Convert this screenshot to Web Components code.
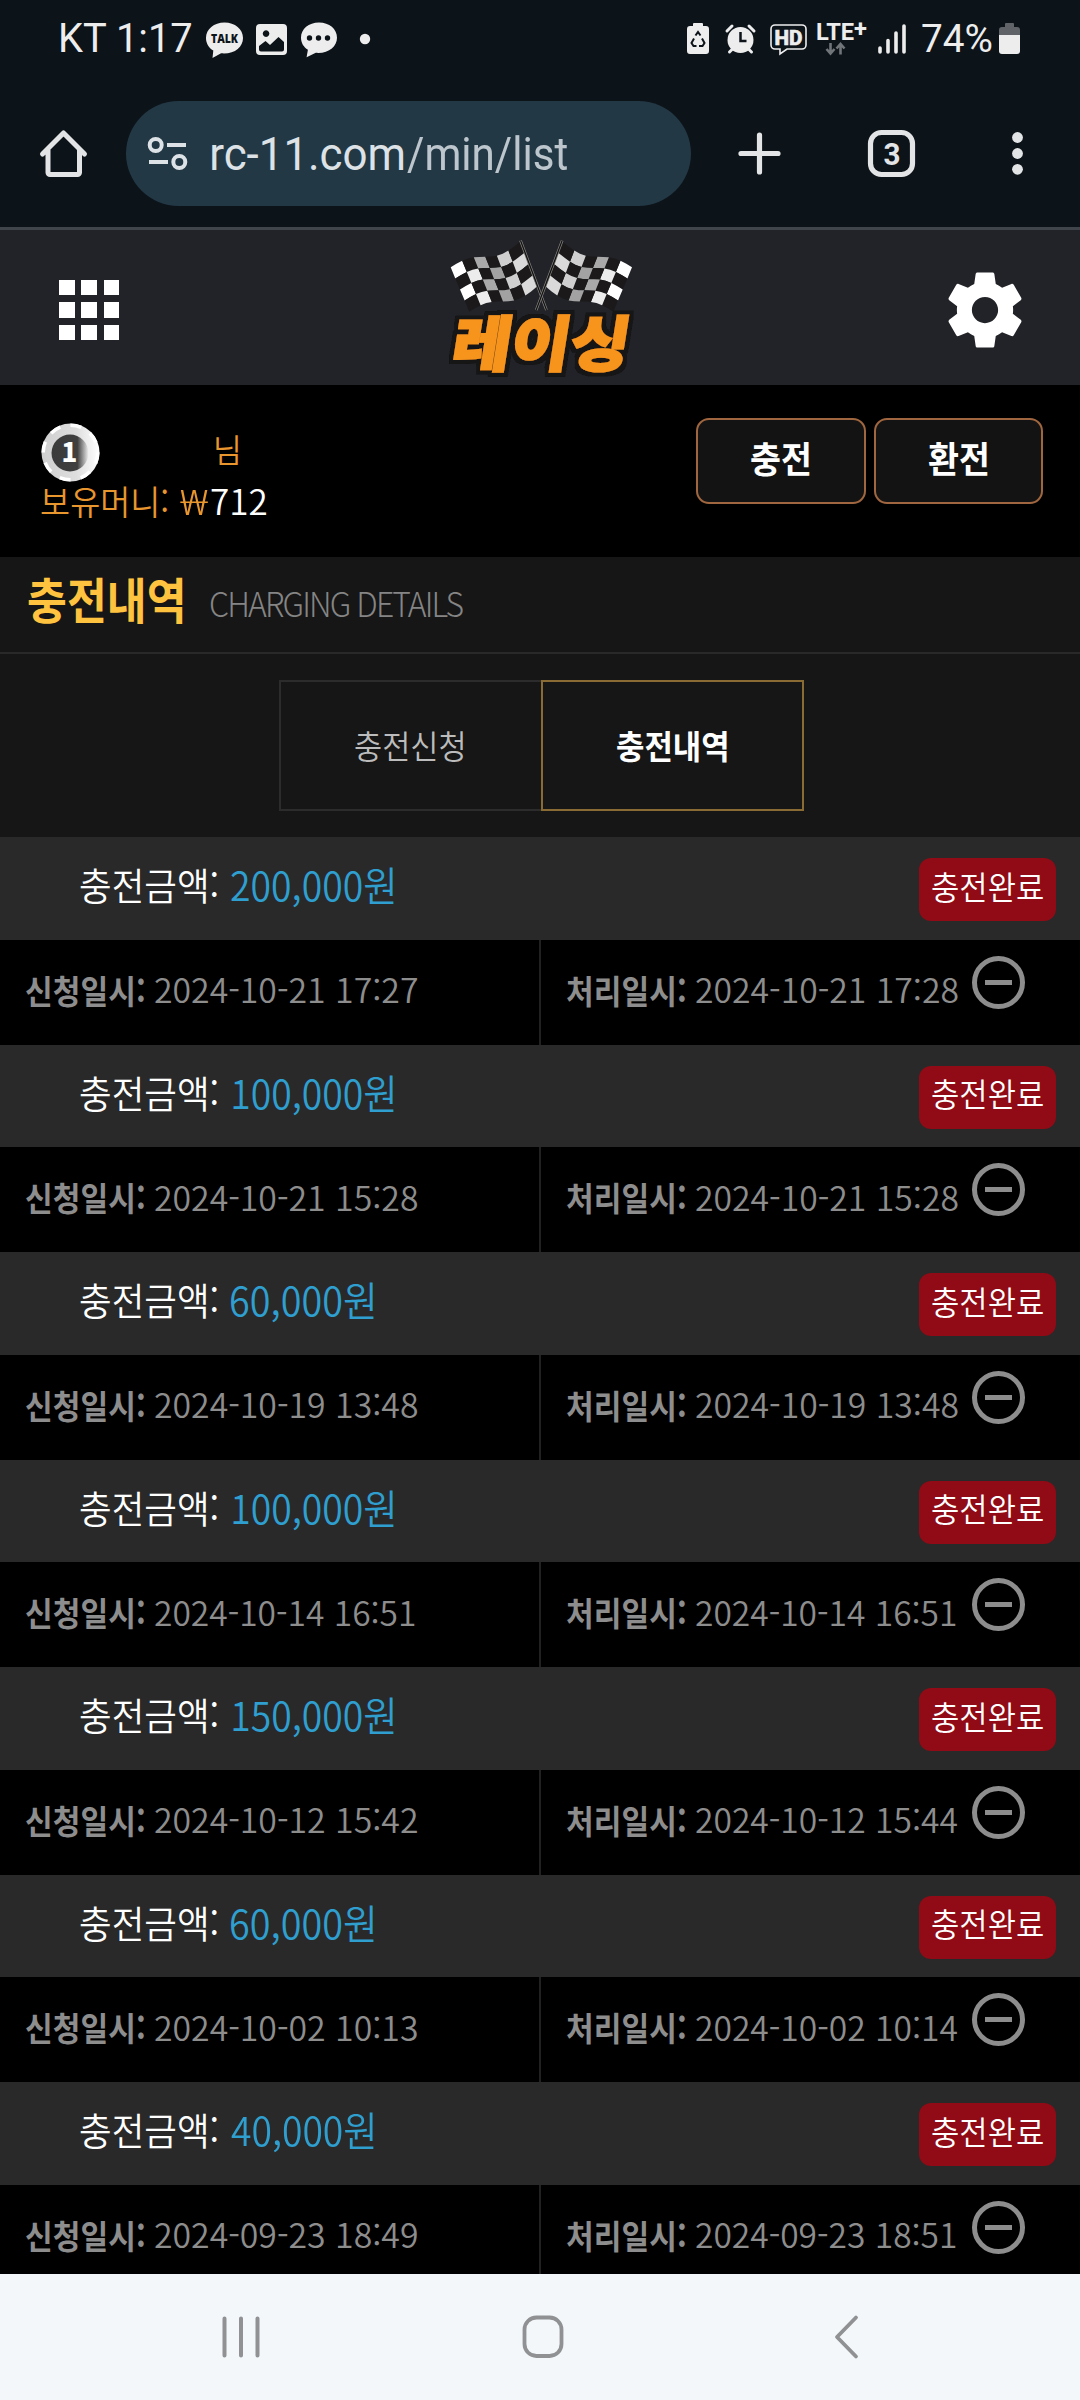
<!DOCTYPE html>
<html lang="ko">
<head>
<meta charset="utf-8">
<title>레이싱</title>
<style>
html,body{margin:0;padding:0;background:#000}
body{font-family:"Noto Sans CJK KR","Noto Sans",sans-serif}
</style>
</head>
<body>
<racing-screen></racing-screen>
<script>
const define = (name, html, setup) => customElements.define(name, class extends HTMLElement {
  connectedCallback() {
    if (this.shadowRoot) return;
    const root = this.attachShadow({mode: 'open'});
    root.innerHTML = typeof html === 'function' ? html(this) : html;
    if (setup) setup(this, root);
  }
});

/* Single line of text whose ink is exactly `w` wide, with its baseline `base` below the parent's top. */
const pen = document.createElement('canvas').getContext('2d');
const FACES = {
  kr: ['"Noto Sans CJK KR",sans-serif', .936],
  latin: ['"Noto Sans",sans-serif', .888],
  roboto: ['Roboto,sans-serif', .8415]
};
define('fit-text', '<style>:host{display:block;flex:none;white-space:pre;line-height:1}span{display:inline-block;transform-origin:0 0}</style><span><slot></slot></span>', (el, root) => {
  const size = +el.getAttribute('size'), w = +el.getAttribute('w');
  const weight = el.getAttribute('weight') || 400, sp = el.getAttribute('spacing') || '0';
  const [family, k] = FACES[el.getAttribute('face') || 'kr'];
  const span = root.querySelector('span');
  el.style.cssText += `;font:${weight} ${size}px/1 ${family};height:${size}px;width:${w}px;letter-spacing:${sp}px;margin-top:${(+el.getAttribute('base') - k * size).toFixed(2)}px`;
  pen.font = `${weight} ${size}px ${family}`;
  pen.letterSpacing = sp + 'px';
  const m = pen.measureText(el.textContent);
  const s = w / (m.actualBoundingBoxLeft + m.actualBoundingBoxRight);
  span.style.transform = `translateX(${m.actualBoundingBoxLeft * s}px) scaleX(${s})`;
});

define('status-bar', `<style>
:host{display:flex;height:100px;background:#0c1319;color:#ededed;align-items:flex-start;padding:0 60px 0 61px;box-sizing:border-box}
svg{display:block;flex:none;height:100px}
.gap{flex:1}
</style>
<fit-text face="roboto" size="40" w="131" base="53">KT 1:17</fit-text>
<svg width="190" height="100" viewBox="192 0 190 100" fill="#ededed">
 <path d="M224.500 22.500c-10.500 0-18.500 6.700-18.500 15.400 0 5.300 2.700 9.700 7.300 12.600l-.8 7.500 8.600-4.700c13 1.200 21.900-6 21.900-15.400 0-8.700-8-15.400-18.500-15.400z"/>
 <text x="211" y="43" font-family="Open Sans" font-weight="800" font-size="12.500" textLength="27" lengthAdjust="spacingAndGlyphs" fill="#0c1319">TALK</text>
 <path fill-rule="evenodd" d="M260 24h23a4 4 0 0 1 4 4v23a4 4 0 0 1-4 4h-23a4 4 0 0 1-4-4V28a4 4 0 0 1 4-4zM259 46v3.500a2 2 0 0 0 2 2h21a2 2 0 0 0 2-2V42l-5.500-5-8.500 8-4.500-4zM266 30.300a3.300 3.300 0 1 0 .1 0z"/>
 <path d="M319 22.500c-10.300 0-18 6.600-18 15.200 0 5 2.600 9.300 6.900 12.100l-1.300 7.500 9.200-4.500c12.800 1 21.200-6.300 21.200-15.100 0-8.600-7.700-15.200-18-15.200z"/>
 <g fill="#0c1319"><circle cx="309.500" cy="38" r="2.700"/><circle cx="318.500" cy="38" r="2.700"/><circle cx="327.500" cy="38" r="2.700"/></g>
 <circle cx="365" cy="39" r="5.200"/>
</svg>
<div class="gap"></div>
<svg width="235" height="100" viewBox="687 0 235 100" fill="#ededed">
 <path d="M693 26v-2a1 1 0 0 1 1-1h8a1 1 0 0 1 1 1v2h3a3 3 0 0 1 3 3v22a3 3 0 0 1-3 3h-16a3 3 0 0 1-3-3V29a3 3 0 0 1 3-3z"/>
 <path d="M695.500 35.500l2.500-3.500 2.500 3.500M702 38.500l2.500 4.500-2 3h-3.500M696.500 46h-3l-2-3 2.500-4.500" fill="none" stroke="#0c1319" stroke-width="2"/>
 <path d="M727 31l5-5M754 31l-5-5M729.500 52l4-4M751.500 52l-4-4" stroke="#ededed" stroke-width="3" stroke-linecap="round"/><circle cx="740.500" cy="40" r="13"/>
 <path d="M740.500 32v9h6" fill="none" stroke="#0c1319" stroke-width="2.500"/>
 <path d="M775 25h27a4 4 0 0 1 4 4v16a4 4 0 0 1-4 4h-15l-7 5v-5h-5a4 4 0 0 1-4-4V29a4 4 0 0 1 4-4z" fill="none" stroke="#ededed" stroke-width="1.600"/>
 <text x="774.500" y="44.500" font-family="Roboto" font-weight="800" font-size="20" textLength="28" lengthAdjust="spacingAndGlyphs" stroke="#ededed" stroke-width=".6">HD</text>
 <text x="816" y="39.500" font-family="Roboto" font-weight="700" font-size="23" textLength="51" lengthAdjust="spacingAndGlyphs">LTE<tspan dy="-3">+</tspan></text>
 <path d="M830.500 43v10m-4-4l4 4.500 4-4.500M840.500 54.500V44m-4 4.500l4-4.500 4 4.500" fill="none" stroke="#70757a" stroke-width="2.600"/>
 <path d="M880 48v4M888 40.500v11.500M896 33v19M904 26v26" stroke="#ededed" stroke-width="3.600" stroke-linecap="round"/>
</svg>
<fit-text face="roboto" size="39.500" w="70" base="52.500">74%</fit-text>
<svg width="28" height="100" viewBox="992 0 28 100">
 <path fill="#606368" d="M1005 27v-3a1 1 0 0 1 1-1h7a1 1 0 0 1 1 1v3h3a3 3 0 0 1 3 3v6h-21v-6a3 3 0 0 1 3-3z"/>
 <path fill="#ededed" d="M999 35h21v16a3 3 0 0 1-3 3h-15a3 3 0 0 1-3-3z"/>
</svg>`);

define('browser-bar', `<style>
:host{display:flex;height:130px;padding:1px 50px 0 0;box-sizing:border-box;background:#0c1319;border-bottom:3px solid #40454b}
svg{display:block;flex:none}
.pill{display:flex;width:565px;height:105px;border-radius:53px;background:#233845;overflow:hidden;flex:none}
.host{color:#dde2e6}.path{color:#bdc6cd}
</style>
<svg width="126" height="105" viewBox="0 101 126 105" fill="none" stroke="#e3e4e5" stroke-width="5" stroke-linecap="round" stroke-linejoin="round"><path d="M42.500 154L63.500 133l21 21M48 150v22.500a2 2 0 0 0 2 2h27.500a2 2 0 0 0 2-2V150"/></svg>
<div class="pill">
<svg width="86" height="105" viewBox="126 101 86 105" fill="none" stroke="#dde2e6" stroke-width="4"><circle cx="155.700" cy="145" r="6"/><path d="M167 145h19M149 162h19"/><circle cx="179.300" cy="162" r="6"/></svg>
<fit-text class="host" face="roboto" size="47" w="192" base="69">rc-11.com</fit-text>
<fit-text class="path" style="margin-left:3px" face="roboto" size="47" w="160" base="69">/min/list</fit-text>
</div>
<svg width="339" height="105" viewBox="691 101 339 105" fill="none" stroke="#e3e4e5" stroke-width="5.200" stroke-linecap="round">
<path d="M741 153.500h37M759.500 135v37"/><rect x="870.500" y="132.500" width="42" height="42" rx="11"/>
<text x="892" y="164.500" text-anchor="middle" font-family="Roboto" font-weight="700" font-size="32" fill="#e3e4e5" stroke="none" textLength="17" lengthAdjust="spacingAndGlyphs">3</text>
<g fill="#e3e4e5" stroke="none"><circle cx="1017.500" cy="137.500" r="5.400"/><circle cx="1017.500" cy="153.500" r="5.400"/><circle cx="1017.500" cy="169.300" r="5.400"/></g></svg>`);

/* Waving checkered flag: 6 columns by 4 rows, interpolated between its four corners. */
function flagCells() {
  const point = (u, v) => {
    const top = [92 + 208 * u, 112 - 77 * u], bot = [148 + 202 * u, 245 - 75 * u];
    const wave = -12 * Math.sin(2 * Math.PI * u) + 7 * Math.sin(Math.PI * u);
    return [(top[0] + (bot[0] - top[0]) * v) / 3, (top[1] + (bot[1] - top[1]) * v + wave) / 3].map(n => n.toFixed(1)).join(' ');
  };
  const tones = ['#fff', '#ececec', '#a9a9a9', '#a2a2a2', '#cfcfcf', '#dadada'];
  let out = '';
  for (let c = 0; c < 6; c++) for (let r = 0; r < 4; r++) {
    const a = c / 6, b = (c + 1) / 6, m = (a + b) / 2, t = r / 4, d = (r + 1) / 4;
    out += `<path fill="${(c + r) % 2 ? '#1b191a' : tones[c]}" d="M${point(a, t)}L${point(m, t)}L${point(b, t)}L${point(b, d)}L${point(m, d)}L${point(a, d)}z"/>`;
  }
  return out + '<path d="M100.500 10.500L126.500 80" stroke="#8d8b86" stroke-width="2.600"/><path d="M100.500 10.500L126.500 80" stroke="#111" stroke-width="1.300"/>';
}
define('racing-logo', () => `<style>:host{display:block;width:240px;height:155px}svg{display:block}</style>
<svg width="240" height="155" viewBox="0 0 240 155">
<defs><filter id="edge" x="-10%" y="-20%" width="120%" height="140%"><feMorphology in="SourceAlpha" operator="dilate" radius="4" result="fat"/><feFlood flood-color="#141313"/><feComposite in2="fat" operator="in"/><feMerge><feMergeNode/><feMergeNode in="SourceGraphic"/></feMerge></filter></defs>
<g>${flagCells()}</g><g transform="translate(242.700 0) scale(-1 1)">${flagCells()}</g>
<g filter="url(#edge)"><text transform="translate(29.500 135.500) skewX(-9)" x="0" y="0" font-family="Noto Sans CJK KR" font-weight="900" font-size="60" textLength="177" lengthAdjust="spacingAndGlyphs" fill="#f7941d" stroke="#f7941d" stroke-width="2">레이싱</text></g>
</svg>`);

define('site-header', `<style>
:host{display:flex;height:155px;background:#222328;align-items:center;justify-content:space-between;padding:0 50px 0 59px;box-sizing:border-box}
.menu{display:grid;grid-template-columns:repeat(3,15.500px);grid-auto-rows:15.500px;gap:6.800px}
.menu i{background:#fff}
.side{width:81px;flex:none;margin-top:5px}
svg{display:block}
</style>
<div class="side"><div class="menu"><i></i><i></i><i></i><i></i><i></i><i></i><i></i><i></i><i></i></div></div>
<racing-logo></racing-logo>
<svg width="90" height="90" viewBox="0 0 24 24" style="margin-top:5px"><path fill="#fff" d="M19.430 12.980c.04-.32.07-.64.07-.98s-.03-.66-.07-.98l2.110-1.650c.19-.15.24-.42.12-.64l-2-3.460c-.12-.22-.39-.3-.61-.22l-2.490 1c-.52-.4-1.080-.73-1.690-.98l-.38-2.650C14.460 2.180 14.250 2 14 2h-4c-.25 0-.46.18-.49.42l-.38 2.650c-.61.25-1.170.59-1.690.98l-2.490-1c-.23-.09-.49 0-.61.22l-2 3.460c-.13.22-.07.49.12.64l2.110 1.650c-.04.32-.07.65-.07.98s.03.66.07.98l-2.110 1.650c-.19.15-.24.42-.12.64l2 3.460c.12.22.39.3.61.22l2.490-1c.52.4 1.080.73 1.690.98l.38 2.650c.03.24.24.42.49.42h4c.25 0 .46-.18.49-.42l.38-2.650c.61-.25 1.170-.59 1.690-.98l2.490 1c.23.09.49 0 .61-.22l2-3.460c.12-.22.07-.49-.12-.64l-2.110-1.650zM12 15.500c-1.930 0-3.500-1.570-3.500-3.500s1.570-3.500 3.500-3.500 3.500 1.570 3.500 3.500-1.570 3.500-3.500 3.500z"/></svg>`);

define('outline-button', `<style>:host{display:flex;justify-content:center;align-items:flex-start;box-sizing:border-box;width:169.500px;height:86px;border:2px solid #a0663f;border-radius:13px;background:#131313;color:#fff}</style><slot></slot>`);

define('account-bar', `<style>
:host{display:flex;justify-content:space-between;height:172px;background:#000;padding:0 37px 0 41px;box-sizing:border-box;color:#e9962f}
.name{display:flex;height:97px;align-items:flex-start}
.name svg{margin-top:37.500px;display:block}
.money{display:flex;align-items:flex-start;gap:3px}
.won{color:#fff}
.actions{display:flex;gap:8px;padding-top:33px}
</style>
<div><div class="name">
<svg width="60" height="60" viewBox="0 0 60 60"><defs><linearGradient id="g" x2="1"><stop offset="0" stop-color="#3b3b3b"/><stop offset=".7" stop-color="#3f3f3f"/><stop offset="1" stop-color="#eee"/></linearGradient><linearGradient id="r" x2="1"><stop offset="0" stop-color="#cfcfcf"/><stop offset=".6" stop-color="#dedede"/><stop offset="1" stop-color="#fff"/></linearGradient></defs>
<circle cx="29.500" cy="29.500" r="29" fill="url(#r)"/><circle cx="29.500" cy="29.500" r="27.300" fill="none" stroke="#fff" stroke-width="3.500" stroke-dasharray="11 10.400"/><circle cx="29" cy="30" r="18.500" fill="url(#g)"/>
<text x="28.500" y="38.500" text-anchor="middle" font-family="Noto Sans CJK KR" font-weight="900" font-size="26" fill="#fff">1</text></svg>
<fit-text style="margin-left:115px" size="32" w="22.500" base="77" weight="350">님</fit-text></div>
<div class="money"><fit-text size="34.500" w="126" base="33.500" weight="350">보유머니:</fit-text><fit-text style="margin-left:10px" face="latin" size="35" w="28" base="33" weight="300">₩</fit-text><fit-text class="won" size="35" w="55.500" base="33" weight="350">712</fit-text></div></div>
<div class="actions"><outline-button><fit-text size="36" w="59" base="53" weight="700">충전</fit-text></outline-button><outline-button><fit-text size="36" w="59" base="53" weight="700">환전</fit-text></outline-button></div>`);

define('page-title', `<style>:host{display:flex;align-items:flex-start;gap:29px;height:97px;padding-left:28px;box-sizing:border-box;background:#161616;border-bottom:2px solid #292929}
.ko{color:#ffc33f}.en{color:#858585}</style>
<fit-text class="ko" size="49" w="154" base="62" weight="700">충전내역</fit-text><fit-text class="en" size="34" w="250.500" base="60.500" weight="300" spacing="-2">CHARGING DETAILS</fit-text>`);

define('tab-strip', `<style>:host{display:flex;justify-content:center;height:183px;background:#161616;padding-top:26px;box-sizing:border-box;padding-left:3px}
div{display:flex;justify-content:center;align-items:flex-start;width:262px;height:131px;box-sizing:border-box;border:2px solid #2c2c2c;border-right:0;color:#bcbcbc;padding-right:4px}
.on{width:263px;border:2px solid #8a6b33;color:#fff;padding-right:2px}</style>
<div><fit-text size="33" w="108.500" base="77.500" weight="350">충전신청</fit-text></div><div class="on"><fit-text size="33" w="109.500" base="77.500" weight="700">충전내역</fit-text></div>`);

define('status-pill', `<style>:host{display:flex;justify-content:center;align-items:flex-start;flex:none;width:137px;height:63px;border-radius:12px;background:#900b15;color:#fff}</style><slot></slot>`);

define('charge-record', el => {
  const g = n => el.getAttribute(n), amount = g('amount');
  const one = amount[0] === '1', asked1 = g('asked').endsWith('1'), done1 = g('done').endsWith('1');
  const amountWidth = amount.length > 6 ? (one ? 161 : 163) : 143;
  return `<style>
:host{display:block;height:207.500px}
.head{display:flex;align-items:flex-start;height:102.500px;background:#292929;padding:0 24px 0 80px;box-sizing:border-box;color:#fff}
.amount{color:#2f9fd0;margin-left:${one ? 16 : 14}px}
status-pill{margin:21px 0 0 auto}
.times{display:grid;grid-template-columns:541px 1fr;height:105px;background:#000;color:#8d8d8d}
.cell{display:flex;align-items:flex-start;padding-left:26px;box-sizing:border-box}
.cell:first-child{border-right:2px solid #212121}
.date{margin-left:11px}
svg{display:block;margin:16px 0 0 ${done1 ? 18 : 16.5}px}
</style>
<div class="head"><fit-text size="38" w="137" base="64" weight="350">충전금액:</fit-text><fit-text class="amount" size="40" w="${amountWidth}" base="64.500" weight="350">${amount}원</fit-text><status-pill><fit-text size="33" w="111" base="42.500" weight="350">충전완료</fit-text></status-pill></div>
<div class="times"><div class="cell"><fit-text size="33.500" w="118" base="64.500" weight="700">신청일시:</fit-text><fit-text class="date" size="33.500" w="${asked1 ? 258 : 260}" base="64" weight="350">${g('asked')}</fit-text></div>
<div class="cell"><fit-text size="33.500" w="118" base="64.500" weight="700">처리일시:</fit-text><fit-text class="date" size="33.500" w="${done1 ? 258 : 259.5}" base="64" weight="350">${g('done')}</fit-text><svg width="53" height="53" viewBox="0 0 53 53" fill="none" stroke="#8d8d8d" stroke-width="5"><circle cx="26.500" cy="26.500" r="24"/><path d="M13 26.500h27"/></svg></div></div>`;
});

define('system-nav', `<style>:host{display:block;flex:none;height:126px;background:#f3f7fa}svg{display:block}</style>
<svg width="1080" height="126" viewBox="0 2274 1080 126" fill="none" stroke="#8f9192" stroke-linecap="round" stroke-linejoin="round">
<path d="M224.500 2318.500v37M241 2318.500v37M257.500 2318.500v37" stroke-width="4"/><rect x="524.500" y="2317.500" width="37" height="38.500" rx="12" stroke-width="3.800"/><path d="M856 2317.500L837 2337l19 19.500" stroke-width="3.800"/></svg>`);

const RECORDS = [
  ['200,000', '2024-10-21 17:27', '2024-10-21 17:28'],
  ['100,000', '2024-10-21 15:28', '2024-10-21 15:28'],
  ['60,000', '2024-10-19 13:48', '2024-10-19 13:48'],
  ['100,000', '2024-10-14 16:51', '2024-10-14 16:51'],
  ['150,000', '2024-10-12 15:42', '2024-10-12 15:44'],
  ['60,000', '2024-10-02 10:13', '2024-10-02 10:14'],
  ['40,000', '2024-09-23 18:49', '2024-09-23 18:51']
];
define('racing-screen', () => `<style>:host{display:flex;flex-direction:column;width:1080px;height:2400px;overflow:hidden}
.list{height:1437px;overflow:hidden;flex:none}
status-bar,browser-bar,site-header,account-bar,page-title,tab-strip{flex:none}</style>
<status-bar></status-bar><browser-bar></browser-bar><site-header></site-header><account-bar></account-bar><page-title></page-title><tab-strip></tab-strip>
<div class="list">${RECORDS.map(([a, q, d]) => `<charge-record amount="${a}" asked="${q}" done="${d}"></charge-record>`).join('')}</div>
<system-nav></system-nav>`);
</script>
</body>
</html>
